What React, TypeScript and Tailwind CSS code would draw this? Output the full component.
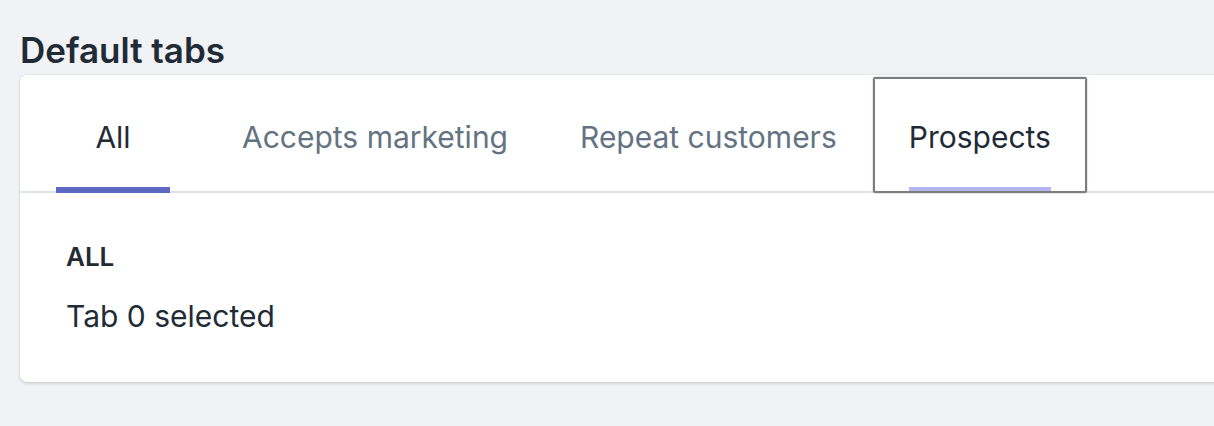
import React, { useState } from 'react';

const tabs = ['All', 'Accepts marketing', 'Repeat customers', 'Prospects'];

const App: React.FC = () => {
  const [selected, setSelected] = useState(0);
  const focused = 3;

  return (
    <div
      className="w-[1214px] h-[426px] bg-[#f1f2f5] overflow-hidden"
      style={{ fontFamily: 'Inter, "Noto Sans", sans-serif' }}
    >
      <div className="pl-5 pt-[30px]">
        <h2 className="text-[35px] leading-[40px] font-semibold text-[#212b36]">
          Default tabs
        </h2>

        {/* Card */}
        <div className="mt-[5px] w-[1260px] h-[307px] bg-white rounded-[7px] shadow-[0_0_0_1px_rgba(63,63,68,0.06),0_2px_3px_0_rgba(63,63,68,0.15)]">
          {/* Tab list */}
          <ul className="flex border-b-2 border-[#dfe3e8]">
            {tabs.map((tab, i) => {
              const isSelected = i === selected;
              const isFocused = i === focused;
              return (
                <li key={tab} className="-mb-[2px]">
                  <button
                    onClick={() => setSelected(i)}
                    className="relative flex h-[118px] px-[36px] pt-[13px] outline-none"
                  >
                    {isFocused && (
                      <span className="absolute left-0 right-0 top-[2px] bottom-0 border-2 border-[#7d7d7d] rounded-[2px] shadow-[0_0_2px_rgba(0,0,0,0.35)]" />
                    )}
                    <span
                      className={`flex items-center justify-center min-w-[114px] h-full border-b-[6px] text-[30px] ${
                        isSelected
                          ? 'border-[#5c6ac4] text-[#212b36]'
                          : isFocused
                          ? 'border-[#b3b5f0] text-[#212b36]'
                          : 'border-transparent text-[#637381]'
                      }`}
                    >
                      {tab}
                    </span>
                  </button>
                </li>
              );
            })}
          </ul>

          {/* Panel */}
          <div className="pl-[46px] pt-[48px]">
            <p className="text-[26px] leading-[32px] font-semibold text-[#212b36] uppercase">
              {tabs[selected]}
            </p>
            <p className="mt-[23px] text-[30px] leading-[40px] text-[#212b36]">
              Tab {selected} selected
            </p>
          </div>
        </div>
      </div>
    </div>
  );
};

export default App;
